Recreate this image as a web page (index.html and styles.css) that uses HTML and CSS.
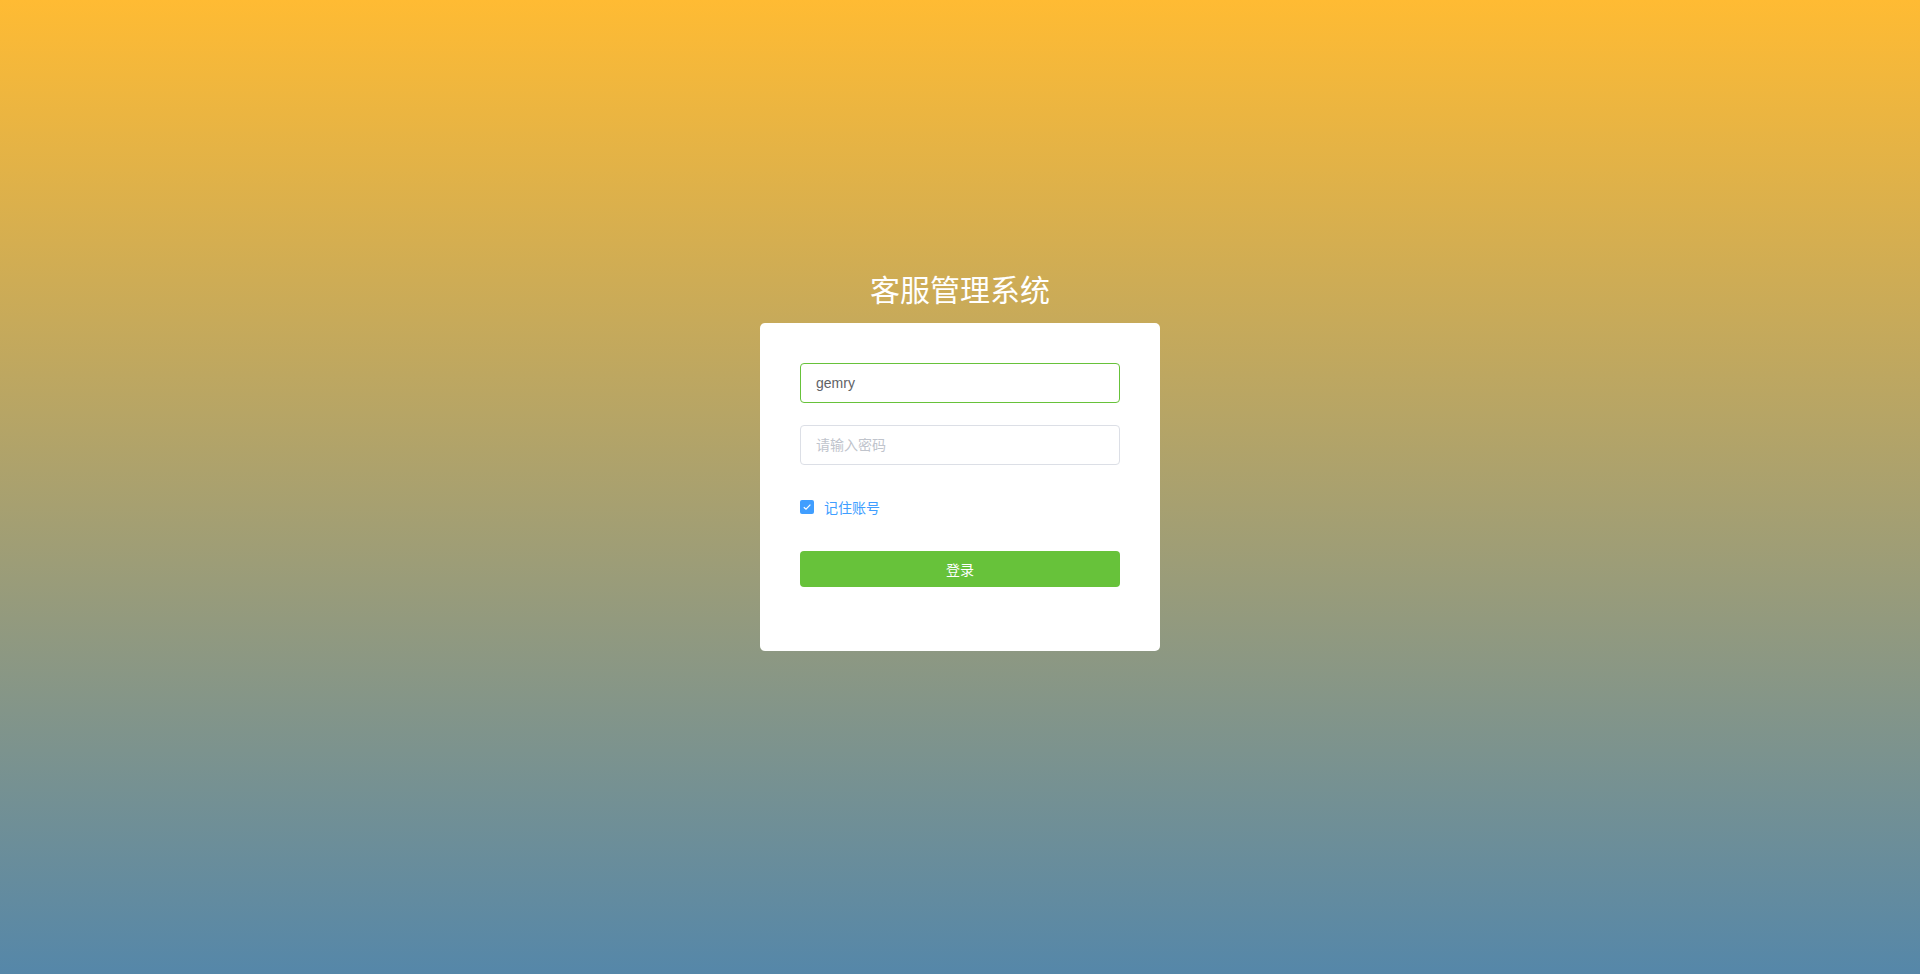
FILE: index.html
```html
<!DOCTYPE html>
<html lang="zh-CN">
<head>
<meta charset="utf-8">
<title>客服管理系统</title>
<link rel="stylesheet" href="styles.css">
</head>
<body>
<div class="page">
  <div class="login">
    <h1 class="title">客服管理系统</h1>
    <form class="card" onsubmit="return false">
      <div class="form-item">
        <input class="input input-active" type="text" value="gemry">
      </div>
      <div class="form-item">
        <input class="input" type="password" placeholder="请输入密码">
      </div>
      <div class="form-item row">
        <label class="checkbox">
          <span class="box">
            <svg viewBox="0 0 14 14" width="14" height="14"><path d="M3.8 7.2 L6 9.2 L10.4 4.6" fill="none" stroke="#fff" stroke-width="1.2"/></svg>
          </span>
          <span class="check-label">记住账号</span>
        </label>
      </div>
      <div class="form-item row">
        <button class="btn" type="button">登录</button>
      </div>
    </form>
  </div>
</div>
</body>
</html>
```
FILE: styles.css
```css
* { box-sizing: border-box; }
html, body { margin: 0; padding: 0; height: 100%; overflow: hidden; }
body {
  font-family: "Liberation Sans", "Noto Sans CJK SC", Arial, sans-serif;
  background: linear-gradient(to bottom, #ffbb33 0%, #5587a9 100%);
}
.page {
  height: 100%;
  display: flex;
  align-items: center;
  justify-content: center;
  padding-bottom: 55px;
}
.login {
  width: 400px;
  display: flex;
  flex-direction: column;
}
.title {
  margin: 0 0 15px;
  height: 40px;
  line-height: 40px;
  font-size: 30px;
  font-weight: 400;
  color: #fff;
  text-align: center;
  font-family: "Noto Sans CJK SC", sans-serif;
}
.card {
  background: #fff;
  border-radius: 5px;
  padding: 40px;
  margin: 0;
}
.form-item {
  margin-bottom: 22px;
  height: 40px;
}
.row {
  display: flex;
  align-items: center;
}
.input {
  display: block;
  width: 100%;
  height: 40px;
  border: 1px solid #dcdfe6;
  border-radius: 4px;
  padding: 0 15px;
  font-size: 14px;
  color: #606266;
  font-family: "Liberation Sans", "Noto Sans CJK SC", sans-serif;
  outline: none;
  background: #fff;
}
.input::placeholder { color: #c0c4cc; }
.input-active { border-color: #67c23a; }
.checkbox {
  display: flex;
  align-items: center;
  cursor: pointer;
  line-height: 14px;
}
.box {
  width: 14px;
  height: 14px;
  border-radius: 2px;
  background: #409eff;
  display: block;
}
.box svg { display: block; }
.check-label {
  padding-left: 10px;
  font-size: 14px;
  line-height: 14px;
  color: #409eff;
  font-family: "Noto Sans CJK SC", sans-serif;
}
.btn {
  width: 100%;
  height: 36px;
  border: none;
  border-radius: 4px;
  background: #67c23a;
  color: #fff;
  font-size: 14px;
  line-height: 14px;
  padding: 0;
  font-family: "Noto Sans CJK SC", sans-serif;
  cursor: pointer;
}
```
